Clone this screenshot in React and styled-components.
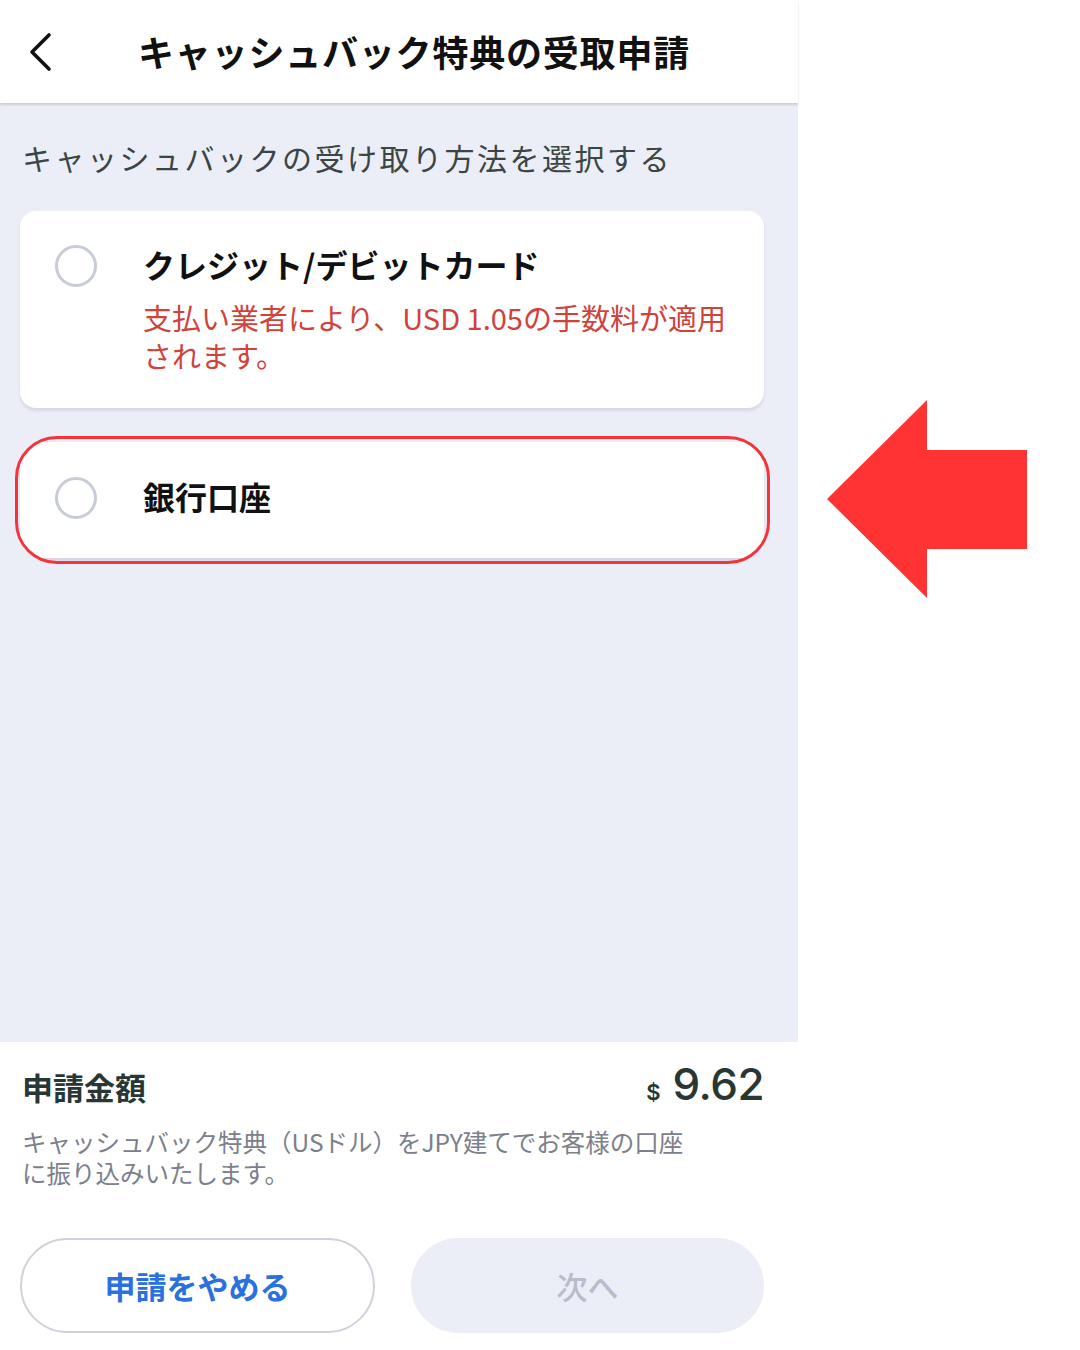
import React from 'react';
import styled, { createGlobalStyle } from 'styled-components';

const GlobalStyle = createGlobalStyle`
  html, body {
    margin: 0;
    padding: 0;
    background: #ffffff;
  }
  body {
    font-family: "Noto Sans CJK JP", "Noto Sans", "Liberation Sans", sans-serif;
  }
`;

const methods = [
  {
    id: 'card',
    label: 'クレジット/デビットカード',
    note: '支払い業者により、USD 1.05の手数料が適用されます。',
  },
  { id: 'bank', label: '銀行口座', highlight: true },
];

function App() {
  return (
    <>
      <GlobalStyle />
      <Page>
        <Phone>
          <Header>
            <BackButton aria-label="戻る">
              <svg width="26" height="40" viewBox="0 0 26 40">
                <path d="M21 3 L4 20 L21 37" fill="none" stroke="#111" strokeWidth="3.6" strokeLinecap="round" strokeLinejoin="round" />
              </svg>
            </BackButton>
            <Title>キャッシュバック特典の受取申請</Title>
          </Header>

          <Body>
            <Lead>キャッシュバックの受け取り方法を選択する</Lead>
            <Options>
              {methods.map(m => {
                const card = (
                  <OptionCard key={m.id} $short={!m.note}>
                    <Radio />
                    <OptionText>
                      <OptionLabel>{m.label}</OptionLabel>
                      {m.note && <OptionNote>{m.note}</OptionNote>}
                    </OptionText>
                  </OptionCard>
                );
                return m.highlight ? <Highlight key={m.id}>{card}</Highlight> : card;
              })}
            </Options>
          </Body>

          <Footer>
            <AmountRow>
              <AmountLabel>申請金額</AmountLabel>
              <Amount>
                <Currency>$</Currency>
                <Value>9.62</Value>
              </Amount>
            </AmountRow>
            <Description>
              キャッシュバック特典（USドル）をJPY建てでお客様の口座
              <br />
              に振り込みいたします。
            </Description>
            <Buttons>
              <Button>申請をやめる</Button>
              <Button $disabled>次へ</Button>
            </Buttons>
          </Footer>
        </Phone>

        <Side>
          <svg width="200" height="200" viewBox="0 0 200 200">
            <polygon points="0,99 100,0 100,50 200,50 200,149 100,149 100,198" fill="#ff3333" />
          </svg>
        </Side>
      </Page>
    </>
  );
}

const Page = styled.div`
  display: flex;
  width: 1080px;
  height: 1350px;
  overflow: hidden;
`;

const Phone = styled.div`
  width: 798px;
  height: 1350px;
  display: flex;
  flex-direction: column;
  background: #eceef7;
`;

const Header = styled.div`
  height: 103px;
  flex-shrink: 0;
  display: flex;
  align-items: center;
  background: #ffffff;
  box-shadow: 0 2px 2px rgba(40, 45, 70, 0.16);
  position: relative;
  z-index: 1;
`;

const BackButton = styled.div`
  width: 26px;
  height: 40px;
  margin-left: 28px;
  margin-right: 84px;
  display: flex;
`;

const Title = styled.h1`
  margin: 0;
  font-size: 36px;
  font-weight: 700;
  color: #111111;
  letter-spacing: 0.8px;
  line-height: 1;
  padding-bottom: 2px;
`;

const Body = styled.div`
  flex: 1;
  padding: 32px 34px 0 20px;
`;

const Lead = styled.p`
  margin: 0 0 0 2px;
  font-size: 30px;
  line-height: 44px;
  color: #3a4644;
  letter-spacing: 2.5px;
`;

const Options = styled.div`
  margin-top: 32px;
  display: flex;
  flex-direction: column;
  gap: 33px;
`;

const OptionCard = styled.div`
  display: flex;
  align-items: flex-start;
  gap: 46px;
  padding: ${p => (p.$short ? '35px 30px 39px 35px' : '34px 30px 34px 35px')};
  background: #ffffff;
  border-radius: 16px;
  box-shadow: 0 3px 3px rgba(60, 70, 110, 0.13);
`;

const Highlight = styled.div`
  margin: -5px -6px -5px -5px;
  border: 3px solid #f5333a;
  border-radius: 42px;
  padding: 3px 3px 3px 2px;
  overflow: hidden;
`;

const Radio = styled.div`
  width: 42px;
  height: 42px;
  box-sizing: border-box;
  border-radius: 50%;
  border: 3px solid #c8ccd6;
  flex-shrink: 0;
`;

const OptionText = styled.div`
  display: flex;
  flex-direction: column;
  margin-top: -3px;
  max-width: 590px;
`;

const OptionLabel = styled.div`
  font-size: 32px;
  line-height: 44px;
  font-weight: 700;
  color: #111111;
`;

const OptionNote = styled.div`
  margin-top: 12px;
  font-size: 29px;
  line-height: 38px;
  color: #d1423b;
`;

const Footer = styled.div`
  flex-shrink: 0;
  height: 308px;
  box-sizing: border-box;
  background: #ffffff;
  padding: 15px 34px 0 22px;
`;

const AmountRow = styled.div`
  display: flex;
  justify-content: space-between;
  align-items: baseline;
`;

const AmountLabel = styled.div`
  font-size: 31px;
  line-height: 44px;
  font-weight: 700;
  color: #283634;
`;

const Amount = styled.div`
  display: flex;
  align-items: baseline;
  gap: 12px;
  color: #283634;
  font-family: Inter, "Noto Sans", sans-serif;
`;

const Currency = styled.span`
  font-size: 22px;
  font-weight: 600;
`;

const Value = styled.span`
  font-size: 44px;
  font-weight: 500;
  letter-spacing: -0.5px;
`;

const Description = styled.p`
  margin: 15px 0 0;
  font-size: 24.5px;
  line-height: 31px;
  color: #7b808b;
`;

const Buttons = styled.div`
  margin-top: 50px;
  margin-left: -2px;
  display: grid;
  grid-template-columns: 355px 353px;
  gap: 36px;
`;

const Button = styled.div`
  height: 95px;
  box-sizing: border-box;
  border-radius: 48px;
  display: flex;
  align-items: center;
  justify-content: center;
  font-size: 31px;
  font-weight: 700;
  color: ${p => (p.$disabled ? '#b9bdc7' : '#2a70df')};
  background: ${p => (p.$disabled ? '#eceef7' : '#ffffff')};
  border: 2px solid ${p => (p.$disabled ? '#eceef7' : '#cfd2db')};
  ${p => p.$disabled && 'font-weight: 500;'}
`;

const Side = styled.div`
  flex: 1;
  background: #ffffff;
  padding: 400px 0 0 29px;
`;

export default App;
